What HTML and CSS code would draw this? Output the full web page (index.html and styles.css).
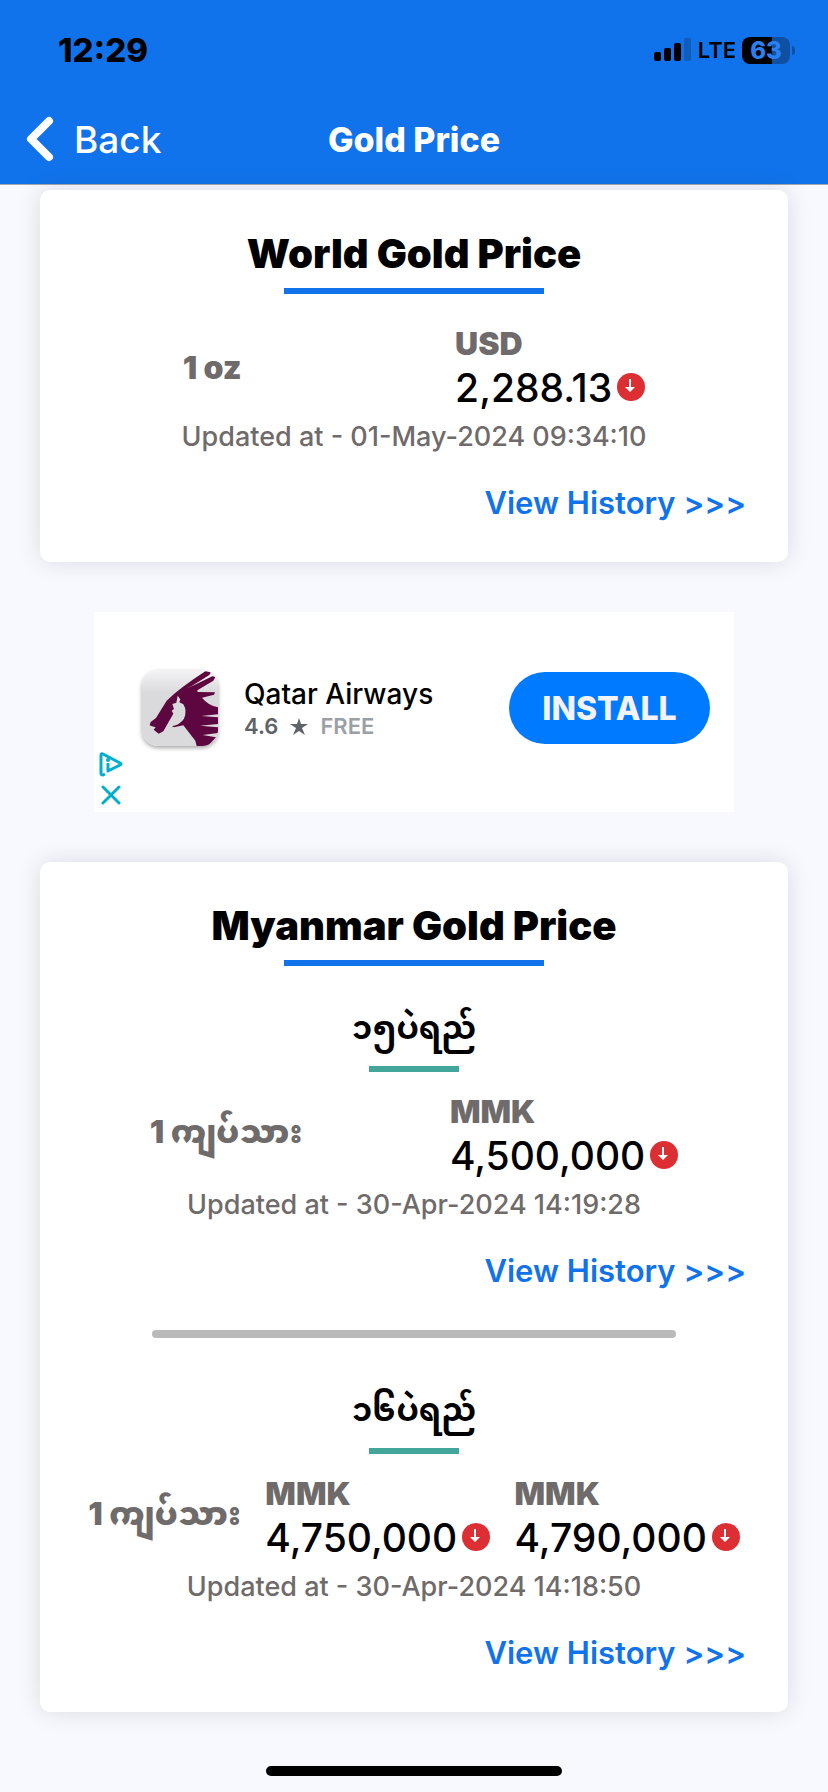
FILE: index.html
```html
<!DOCTYPE html>
<html lang="en">
<head>
    <meta charset="UTF-8">
    <meta name="viewport" content="width=device-width, initial-scale=1.0">
    <title>Gold Price</title>
    <link rel="stylesheet" href="styles.css">
</head>
<body>
    <header class="header">
        <div class="status-bar">
            <span class="time">12:29</span>
            <div class="status-icons">
                <svg class="signal" width="38" height="24" viewBox="0 0 38 24">
                    <rect x="0" y="14" width="7" height="9" rx="2"/>
                    <rect x="10" y="10" width="7" height="13" rx="2"/>
                    <rect x="20" y="5" width="7" height="18" rx="2"/>
                    <rect x="30" y="0" width="7" height="23" rx="2" fill="#0e5cbc"/>
                </svg>
                <span class="network">LTE</span>
                <span class="battery">63</span>
            </div>
        </div>
        <nav class="nav-bar">
            <a href="#" class="back">
                <svg width="28" height="46" viewBox="0 0 28 46">
                    <path d="M23 5 L5 23 L23 41" fill="none" stroke="#fff" stroke-width="8" stroke-linecap="round" stroke-linejoin="round"/>
                </svg>
                Back
            </a>
            <h1 class="page-title">Gold Price</h1>
        </nav>
    </header>

    <svg class="symbols">
        <symbol id="down" viewBox="0 0 28 28">
            <circle cx="14" cy="14" r="14" fill="#dd2f33"/>
            <path d="M12 6 H14 V14 H18 L13 19 L8 14 H12 Z" fill="#fff"/>
        </symbol>
    </svg>

    <main class="content">
        <section class="card">
            <h2 class="card-title">World Gold Price</h2>
            <div class="price-row">
                <span class="unit">1 oz</span>
                <div class="price">
                    <span class="currency">USD</span>
                    <div class="amount">2,288.13<svg class="trend"><use href="#down"/></svg></div>
                </div>
            </div>
            <p class="updated">Updated at - 01-May-2024 09:34:10</p>
            <a href="#" class="history">View History &gt;&gt;&gt;</a>
        </section>

        <aside class="ad">
            <div class="ad-choices">
                <svg width="24" height="26" viewBox="0 0 24 26">
                    <path d="M6 23 L4 24 Q2 24 2 22 V4 Q2 2 4 3 L21 12 Q23 13 21 14 L9 20 V12" fill="none" stroke="#00aecd" stroke-width="3" stroke-linejoin="round"/>
                    <circle cx="9" cy="9" r="2" fill="#00aecd"/>
                </svg>
                <svg width="24" height="20" viewBox="0 0 24 20">
                    <path d="M4 2 L20 18 M20 2 L4 18" stroke="#00aecd" stroke-width="3" stroke-linecap="round"/>
                </svg>
            </div>
            <svg class="ad-logo" viewBox="24 24 228 228">
                <g fill="#5d0640">
                    <path d="M214 28 L231 31 L226 39 L172 73 L158 80 L235 43 L244 45 L238 56 L190 85 L191 90 L243 91 L240 98 L204 107 Q222 130 252 136 V157 L202 162 L252 166 V186 L198 191 L252 196 V213 L206 219 L246 226 L222 252 H188 L184 236 L148 190 L120 196 L114 193 Q138 188 150 170 Q160 146 148 127 L136 121 L139 112 L131 101 L127 122 L115 126 L120 141 L113 146 L118 155 L88 208 L74 215 L59 203 L65 196 L54 193 L47 190 L50 180 L66 168 L98 116 Q140 76 214 28 Z"/>
                </g>
            </svg>
            <div class="ad-text">
                <div class="ad-name">Qatar Airways</div>
                <div class="ad-info">
                    4.6
                    <svg width="18" height="17" viewBox="0 0 18 17"><path d="M9 0 L11 6 H18 L12 10 L15 17 L9 13 L3 17 L6 10 L0 6 H7 Z" fill="#5f6368"/></svg>
                    <span class="free">FREE</span>
                </div>
            </div>
            <button class="install">INSTALL</button>
        </aside>

        <section class="card">
            <h2 class="card-title">Myanmar Gold Price</h2>
            <h3 class="grade" lang="my">၁၅ပဲရည်</h3>
            <div class="price-row">
                <span class="unit" lang="my">1 ကျပ်သား</span>
                <div class="price">
                    <span class="currency">MMK</span>
                    <div class="amount">4,500,000<svg class="trend"><use href="#down"/></svg></div>
                </div>
            </div>
            <p class="updated">Updated at - 30-Apr-2024 14:19:28</p>
            <a href="#" class="history">View History &gt;&gt;&gt;</a>

            <hr class="divider">

            <h3 class="grade" lang="my">၁၆ပဲရည်</h3>
            <div class="price-row">
                <span class="unit" lang="my">1 ကျပ်သား</span>
                <div class="price">
                    <span class="currency">MMK</span>
                    <div class="amount">4,750,000<svg class="trend"><use href="#down"/></svg></div>
                </div>
                <div class="price">
                    <span class="currency">MMK</span>
                    <div class="amount">4,790,000<svg class="trend"><use href="#down"/></svg></div>
                </div>
            </div>
            <p class="updated">Updated at - 30-Apr-2024 14:18:50</p>
            <a href="#" class="history">View History &gt;&gt;&gt;</a>
        </section>
    </main>

    <div class="home-indicator"></div>
</body>
</html>
```
FILE: styles.css
```css
* {
    box-sizing: border-box;
}
body {
    margin: 0;
    background-color: #f8f8ff;
    font-family: Inter, "Noto Sans Myanmar", "Noto Sans", sans-serif;
    color: #000;
}
h1, h2, h3, p {
    margin: 0;
}
a {
    text-decoration: none;
}
.header {
    background-color: #1173eb;
    border-bottom: 1px solid #a5a5ac;
}
.status-bar {
    display: flex;
    justify-content: space-between;
    align-items: center;
    height: 96px;
    padding: 4px 38px 0 58px;
}
.time {
    font-size: 33px;
    font-weight: 800;
}
.status-icons {
    display: flex;
    align-items: center;
    gap: 6px;
}
.network {
    font-size: 22px;
    font-weight: 600;
}
.battery {
    position: relative;
    width: 48px;
    border-radius: 8px;
    background: linear-gradient(to right, #000 62%, #0e50a3 62%);
    color: #2b80f0;
    font-size: 24px;
    font-weight: 800;
    line-height: 27px;
    text-align: center;
}
.battery::after {
    content: "";
    position: absolute;
    right: -5px;
    top: 9px;
    width: 3px;
    height: 9px;
    border-radius: 0 4px 4px 0;
    background-color: #0e50a3;
}
.nav-bar {
    display: grid;
    grid-template-columns: 1fr auto 1fr;
    align-items: center;
    height: 88px;
    padding: 0 26px 2px;
}
.back {
    display: flex;
    align-items: center;
    gap: 20px;
    color: #fff;
    font-size: 37px;
    font-weight: 500;
}
.page-title {
    color: #fff;
    font-size: 34px;
    font-weight: 800;
}
.symbols {
    display: none;
}
.content {
    padding: 5px 40px 0;
}
.card {
    padding: 40px 0;
    border-radius: 10px;
    background-color: #fff;
    box-shadow: 0 0 24px rgba(0, 0, 0, 0.12);
}
.card-title {
    font-size: 40px;
    font-weight: 900;
    line-height: 48px;
    text-align: center;
}
.card-title::after {
    content: "";
    display: block;
    width: 260px;
    height: 6px;
    margin: 10px auto 30px;
    background-color: #1173eb;
}
.grade {
    font-size: 32px;
    font-weight: 700;
    line-height: 64px;
    text-align: center;
}
.grade::after {
    content: "";
    display: block;
    width: 90px;
    height: 6px;
    margin: 6px auto 20px;
    background-color: #43a69b;
}
.price-row {
    display: flex;
    justify-content: space-around;
    align-items: center;
    padding: 0 36px;
}
.unit, .currency {
    color: #6f6b6b;
    font-size: 32px;
    font-weight: 900;
    line-height: 40px;
}
.unit:lang(my) {
    padding-bottom: 8px;
}
.currency {
    display: block;
}
.amount {
    display: flex;
    gap: 5px;
    font-size: 39px;
    font-weight: 500;
    line-height: 48px;
}
.trend {
    width: 28px;
    height: 28px;
    margin-top: 9px;
}
.updated {
    margin-top: 10px;
    color: #6f6b6b;
    font-size: 27px;
    font-weight: 500;
    line-height: 30px;
    text-align: center;
}
.history {
    display: block;
    margin: 32px 42px 0;
    color: #1173eb;
    font-size: 31px;
    font-weight: 600;
    line-height: 38px;
    text-align: right;
}
.divider {
    width: 70%;
    height: 8px;
    margin: 40px auto;
    border: none;
    border-radius: 4px;
    background-color: #bababa;
}
.ad {
    position: relative;
    display: flex;
    align-items: center;
    max-width: 640px;
    height: 200px;
    margin: 50px auto;
    padding: 0 24px 0 48px;
    background-color: #fff;
}
.ad-choices {
    position: absolute;
    left: 5px;
    bottom: 7px;
    display: grid;
    gap: 8px;
}
.ad-logo {
    width: 76px;
    height: 76px;
    margin-top: -8px;
    border-radius: 16px;
    background: linear-gradient(#f4f4f5, #dadadd 30%, #dadadd);
    box-shadow: 0 2px 4px rgba(0, 0, 0, 0.35);
}
.ad-text {
    flex: 1;
    margin: -6px 0 0 26px;
}
.ad-name {
    font-size: 28px;
    font-weight: 500;
    line-height: 34px;
}
.ad-info {
    display: flex;
    align-items: center;
    gap: 12px;
    color: #5f6368;
    font-size: 22px;
    font-weight: 600;
    line-height: 30px;
}
.free {
    color: #9aa0a6;
}
.install {
    width: 201px;
    height: 72px;
    margin-top: -8px;
    border: none;
    border-radius: 36px;
    background-color: #007aff;
    color: #f2f2f7;
    font-family: inherit;
    font-size: 32px;
    font-weight: 800;
}
.home-indicator {
    width: 296px;
    height: 10px;
    margin: 54px auto 16px;
    border-radius: 5px;
    background-color: #000;
}
```
